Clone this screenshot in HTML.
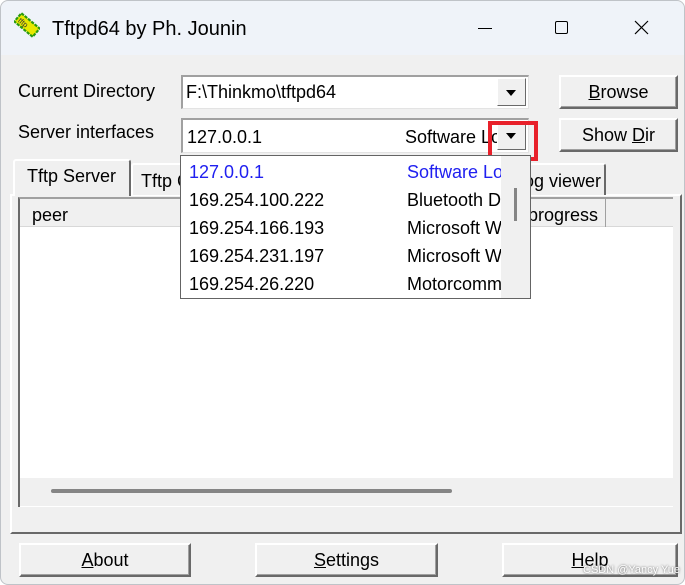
<!DOCTYPE html>
<html><head><meta charset="utf-8"><style>
*{margin:0;padding:0;box-sizing:border-box}
body{width:685px;height:585px;background:#fff;position:relative;overflow:hidden;font-family:"Liberation Sans",sans-serif;color:#000}
.a{position:absolute}
.win{left:0;top:0;width:685px;height:585px;border:1px solid #bfc3c8;border-radius:8px;background:#f0f0f0;overflow:hidden}
.title{left:1px;top:1px;width:683px;height:54px;background:#eff3f9;border-radius:8px 8px 0 0}
.t{font-size:18px;white-space:nowrap;line-height:20px}
.combo{background:#fff;border-top:2px solid #a0a0a0;border-left:2px solid #a0a0a0;border-right:1px solid #e3e3e3;border-bottom:1px solid #e3e3e3}
.btn{background:#f0f0f0;border-top:2px solid #fff;border-left:2px solid #fff;border-right:2px solid #696969;border-bottom:2px solid #696969;box-shadow:inset -1px -1px 0 #a0a0a0;font-size:18px;text-align:center;white-space:nowrap}
.dd{background:#f0f0f0;border-top:1px solid #fff;border-left:1px solid #fff;border-right:1px solid #696969;border-bottom:1px solid #696969}
.tri{width:0;height:0;border-left:5px solid transparent;border-right:5px solid transparent;border-top:6px solid #000}
.tab{background:#f0f0f0;border-top:2px solid #fff;border-left:2px solid #fff;border-right:2px solid #696969;border-radius:3px 3px 0 0;font-size:18px;white-space:nowrap;overflow:hidden}
</style></head><body>
<div class="a win"></div>
<div class="a title"></div>
<svg class="a" style="left:14px;top:12px" width="26" height="26" viewBox="0 0 24 24"><g transform="rotate(40 12 12)"><rect x="1" y="7" width="22" height="10" fill="#e8e800" stroke="#2a9a10" stroke-width="2" stroke-dasharray="3 1"/><text x="3" y="15" font-size="7" font-family="Liberation Sans" fill="#333">tftp</text></g></svg>
<div class="a t" style="left:52px;top:17px;font-size:20px;line-height:24px;color:#000">Tftpd64 by Ph. Jounin</div>
<div class="a" style="left:478px;top:28px;width:14px;height:1px;background:#000"></div>
<div class="a" style="left:555px;top:21px;width:13px;height:13px;border:1px solid #000;border-radius:2px"></div>
<svg class="a" style="left:634px;top:20px" width="15" height="15"><path d="M1 1L14 14M14 1L1 14" stroke="#000" stroke-width="1.2"/></svg>

<div class="a t" style="left:18px;top:81px">Current Directory</div>
<div class="a combo" style="left:181px;top:75px;width:348px;height:34px"></div>
<div class="a t" style="left:186px;top:82px">F:\Thinkmo\tftpd64</div>
<div class="a dd" style="left:497px;top:78px;width:29px;height:28px"></div>
<div class="a tri" style="left:506px;top:90px"></div>
<div class="a btn" style="left:559px;top:75px;width:119px;height:34px;line-height:30px"><u>B</u>rowse</div>

<div class="a t" style="left:18px;top:122px">Server interfaces</div>
<div class="a combo" style="left:181px;top:118px;width:348px;height:35px"></div>
<div class="a t" style="left:187px;top:127px">127.0.0.1</div>
<div class="a t" style="left:405px;top:127px;width:92px;overflow:hidden">Software Lo</div>
<div class="a dd" style="left:497px;top:122px;width:29px;height:28px"></div>
<div class="a tri" style="left:506px;top:133px"></div>
<div class="a" style="left:488px;top:121px;width:50px;height:40px;border:4px solid #e8202a"></div>
<div class="a btn" style="left:559px;top:118px;width:119px;height:34px;line-height:30px">Show <u>D</u>ir</div>

<div class="a" style="left:10px;top:194px;width:672px;height:340px;border-top:2px solid #fff;border-left:2px solid #fff;border-right:2px solid #696969;border-bottom:2px solid #696969"></div>
<div class="a tab" style="left:131px;top:163px;width:60px;height:32px;padding:6px 0 0 8px">Tftp Client</div>
<div class="a tab" style="left:500px;top:163px;width:106px;height:32px;padding:6px 0 0 12px">Log viewer</div>
<div class="a tab" style="left:13px;top:159px;width:118px;height:37px;padding:5px 0 0 12px;z-index:1">Tftp Server</div>

<div class="a" style="left:18px;top:197px;width:655px;height:310px;background:#fff;border-top:2px solid #a0a0a0;border-left:2px solid #696969"></div>
<div class="a" style="left:20px;top:199px;width:653px;height:28px;background:#f0f0f0;border-bottom:1px solid #d8d8d8"></div>
<div class="a t" style="left:32px;top:205px">peer</div>
<div class="a t" style="left:528px;top:205px">progress</div>
<div class="a" style="left:605px;top:199px;width:1px;height:28px;background:#a0a0a0"></div>
<div class="a" style="left:20px;top:478px;width:653px;height:28px;background:#f0f0f0"></div>
<div class="a" style="left:51px;top:489px;width:401px;height:4px;background:#858585;border-radius:2px"></div>

<div class="a" style="left:180px;top:155px;width:351px;height:144px;background:#fff;border:1px solid #646464;z-index:2;overflow:hidden">
<div class="a" style="left:320px;top:0;width:30px;height:143px;background:#f0f0f0"></div>
<div class="a" style="left:333px;top:32px;width:3px;height:33px;background:#858585"></div>
<div class="a t" style="left:8px;top:6px;color:#2020f0">127.0.0.1</div>
<div class="a t" style="left:226px;top:6px;color:#2020f0;width:94px;overflow:hidden">Software Loopback</div>
<div class="a t" style="left:8px;top:34px">169.254.100.222</div>
<div class="a t" style="left:226px;top:34px;width:94px;overflow:hidden">Bluetooth Device</div>
<div class="a t" style="left:8px;top:62px">169.254.166.193</div>
<div class="a t" style="left:226px;top:62px;width:94px;overflow:hidden">Microsoft Wi-Fi</div>
<div class="a t" style="left:8px;top:90px">169.254.231.197</div>
<div class="a t" style="left:226px;top:90px;width:94px;overflow:hidden">Microsoft Wi-Fi</div>
<div class="a t" style="left:8px;top:118px">169.254.26.220</div>
<div class="a t" style="left:226px;top:118px;width:94px;overflow:hidden">Motorcomm</div>
</div>

<div class="a btn" style="left:19px;top:543px;width:172px;height:34px;line-height:30px"><u>A</u>bout</div>
<div class="a btn" style="left:255px;top:543px;width:183px;height:34px;line-height:30px"><u>S</u>ettings</div>
<div class="a btn" style="left:502px;top:543px;width:176px;height:34px;line-height:30px"><u>H</u>elp</div>
<div class="a" style="left:583px;top:564px;font-size:11px;white-space:nowrap;color:#fff;text-shadow:0 0 2px #555">CSDN @Yancy Yue</div>
</body></html>
